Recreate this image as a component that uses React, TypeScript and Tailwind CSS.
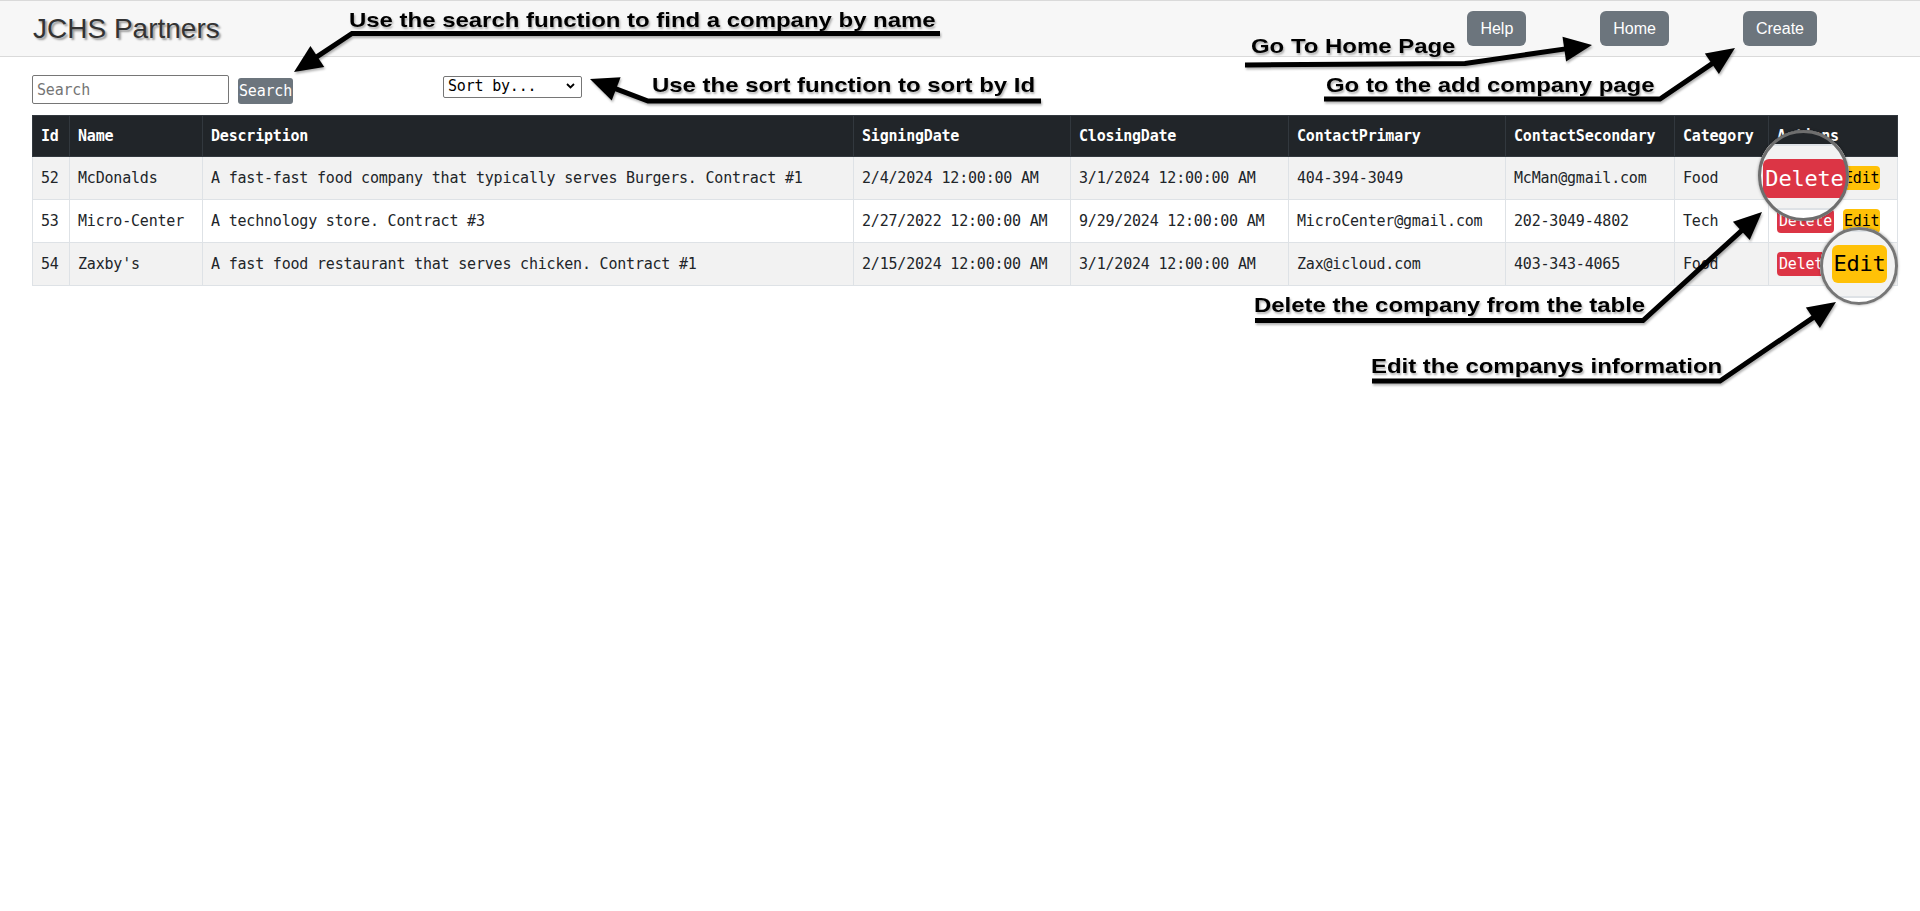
import React from 'react';

type Pt = [number, number];

const rows = [
  {
    id: 52,
    name: 'McDonalds',
    description: 'A fast-fast food company that typically serves Burgers. Contract #1',
    signing: '2/4/2024 12:00:00 AM',
    closing: '3/1/2024 12:00:00 AM',
    primary: '404-394-3049',
    secondary: 'McMan@gmail.com',
    category: 'Food',
  },
  {
    id: 53,
    name: 'Micro-Center',
    description: 'A technology store. Contract #3',
    signing: '2/27/2022 12:00:00 AM',
    closing: '9/29/2024 12:00:00 AM',
    primary: 'MicroCenter@gmail.com',
    secondary: '202-3049-4802',
    category: 'Tech',
  },
  {
    id: 54,
    name: "Zaxby's",
    description: 'A fast food restaurant that serves chicken. Contract #1',
    signing: '2/15/2024 12:00:00 AM',
    closing: '3/1/2024 12:00:00 AM',
    primary: 'Zax@icloud.com',
    secondary: '403-343-4065',
    category: 'Food',
  },
];

const columns = [
  { label: 'Id', w: 'w-[37px]' },
  { label: 'Name', w: 'w-[133px]' },
  { label: 'Description', w: 'w-[651px]' },
  { label: 'SigningDate', w: 'w-[217px]' },
  { label: 'ClosingDate', w: 'w-[218px]' },
  { label: 'ContactPrimary', w: 'w-[217px]' },
  { label: 'ContactSecondary', w: 'w-[169px]' },
  { label: 'Category', w: 'w-[94px]' },
  { label: 'Actions', w: 'w-[129px]' },
];

// arrow: a thick line through pts, finishing in a head at tip
function Arrow({ pts, tip }: { pts: Pt[]; tip: Pt }) {
  const last = pts[pts.length - 1];
  const dx = tip[0] - last[0];
  const dy = tip[1] - last[1];
  const len = Math.hypot(dx, dy);
  const ux = dx / len;
  const uy = dy / len;
  const L = 28;
  const W = 12.5;
  const bx = tip[0] - ux * L;
  const by = tip[1] - uy * L;
  const head = [tip, [bx - uy * W, by + ux * W], [bx + uy * W, by - ux * W]];
  const line = [...pts, [bx + ux * 3, by + uy * 3]];
  return (
    <g>
      <polyline
        points={line.map((p) => p.join(',')).join(' ')}
        fill="none"
        stroke="#000"
        strokeWidth={5}
        strokeLinejoin="miter"
      />
      <polygon points={head.map((p) => p.join(',')).join(' ')} fill="#000" />
    </g>
  );
}

function Note({ children, className }: { children: React.ReactNode; className: string }) {
  return (
    <div
      className={`absolute whitespace-nowrap font-['Liberation_Sans',Arial,sans-serif] text-[21px] font-bold leading-none tracking-normal text-black origin-left scale-x-[1.14] [text-shadow:1px_2px_2px_rgba(0,0,0,0.3)] ${className}`}
    >
      {children}
    </div>
  );
}

export default function App() {
  return (
    <div className="relative min-h-[911px] w-full overflow-hidden bg-white font-['DejaVu_Sans_Mono',monospace] text-[15px] tracking-[-0.2px] text-[#212529]">
      {/* Top bar */}
      <header className="flex h-[57px] items-center justify-between border-t border-b border-[#dadada] bg-[#f7f7f7] pl-[33px] pr-[103px] font-['Liberation_Sans',Arial,sans-serif] tracking-normal">
        <div className="text-[28px] leading-none text-[#333] [text-shadow:2px_2px_2px_#9a9a9a]">JCHS Partners</div>
        <div className="flex gap-[74px]">
          {['Help', 'Home', 'Create'].map((b) => (
            <button
              key={b}
              className="h-[35px] rounded-[6px] bg-[#6c757d] px-[13px] text-[16px] text-white"
            >
              {b}
            </button>
          ))}
        </div>
      </header>

      <div className="px-[32px]">
        {/* Search + sort */}
        <div className="mt-[18px] flex items-start">
          <input
            placeholder="Search"
            className="h-[29px] w-[197px] rounded-[2px] border border-[#767676] px-[4px] placeholder:text-[#757575]"
          />
          <button className="ml-[9px] mt-[3px] h-[26px] w-[55px] rounded-[3px] bg-[#6c757d] px-[1px] text-white">
            Search
          </button>
          <div className="relative ml-[150px]">
            <select className="h-[22px] w-[139px] appearance-none rounded-[2px] border border-[#767676] bg-white pl-[4px] leading-none text-black">
              <option>Sort by...</option>
              <option>Id</option>
            </select>
            <svg
              className="pointer-events-none absolute right-[7px] top-[8px]"
              width="9"
              height="6"
              viewBox="0 0 9 6"
            >
              <path d="M1 1 L4.5 4.5 L8 1" fill="none" stroke="#000" strokeWidth="1.8" />
            </svg>
          </div>
        </div>

        {/* Companies table */}
        <table className="mt-[11px] w-[1865px] table-fixed border-collapse">
          <colgroup>
            {columns.map((c) => (
              <col key={c.label} className={c.w} />
            ))}
          </colgroup>
          <thead>
            <tr className="h-[41px] bg-[#212529] text-white">
              {columns.map((c) => (
                <th key={c.label} className="border border-[#32383e] px-[8px] text-left font-bold">
                  {c.label}
                </th>
              ))}
            </tr>
          </thead>
          <tbody>
            {rows.map((r, i) => (
              <tr key={r.id} className={`h-[43px] ${i % 2 === 0 ? 'bg-[#f2f2f2]' : 'bg-white'}`}>
                {[r.id, r.name, r.description, r.signing, r.closing, r.primary, r.secondary, r.category].map(
                  (v, j) => (
                    <td key={j} className="whitespace-nowrap border border-[#dee2e6] px-[8px]">
                      {v}
                    </td>
                  )
                )}
                <td className="border border-[#dee2e6] px-[8px]">
                  <div className="flex items-center gap-[9px]">
                    <button className="h-[24px] rounded-[4px] bg-[#dc3545] px-[2px] leading-none text-white">
                      Delete
                    </button>
                    <button className="h-[24px] rounded-[4px] bg-[#ffc107] px-[1px] leading-none text-black">
                      Edit
                    </button>
                  </div>
                </td>
              </tr>
            ))}
          </tbody>
        </table>
      </div>

      {/* Magnifier over the first Delete button */}
      <div className="absolute left-[1758px] top-[130px] h-[91px] w-[91px] overflow-hidden rounded-full bg-white">
        <div className="h-[14px] bg-[#212529]" />
        <div className="h-[66px] border-t-2 border-b-2 border-[#dee2e6] bg-[#f2f2f2]" />
        <div className="absolute left-[5px] top-[29px] flex h-[39px] w-[83px] items-center justify-center rounded-[6px] bg-[#dc3545] text-[22px] leading-none text-white">
          Delete
        </div>
      </div>
      <div className="absolute left-[1758px] top-[130px] h-[91px] w-[91px] rounded-full border-[3px] border-[#6e6e6e] shadow-[0_0_3px_rgba(0,0,0,0.35)]" />

      {/* Magnifier over the last Edit button */}
      <div className="absolute left-[1820px] top-[227px] h-[78px] w-[78px] overflow-hidden rounded-full bg-white">
        <div className="mt-[3px] h-[68px] border-t-2 border-b-2 border-[#dee2e6] bg-[#f2f2f2]" />
        <div className="absolute left-[12px] top-[18px] flex h-[38px] w-[55px] items-center justify-center rounded-[6px] bg-[#ffc107] text-[22px] leading-none text-black">
          Edit
        </div>
      </div>
      <div className="absolute left-[1820px] top-[227px] h-[78px] w-[78px] rounded-full border-[3px] border-[#767676] shadow-[0_0_3px_rgba(0,0,0,0.35)]" />

      {/* Annotations */}
      <svg
        className="pointer-events-none absolute left-0 top-0 drop-shadow-[1px_2px_1px_rgba(0,0,0,0.3)]"
        width="1920"
        height="911"
        viewBox="0 0 1920 911"
      >
        <Arrow pts={[[940, 33.5], [352, 33.5]]} tip={[294, 72]} />
        <Arrow pts={[[1041, 101], [648, 101]]} tip={[590, 79]} />
        <Arrow pts={[[1245, 65], [1465, 63.5]]} tip={[1592, 45]} />
        <Arrow pts={[[1324, 99], [1660, 99]]} tip={[1735, 48]} />
        <Arrow pts={[[1255, 320.5], [1643, 320.5]]} tip={[1762, 212]} />
        <Arrow pts={[[1372, 381], [1720, 381]]} tip={[1836, 302]} />
      </svg>

      <Note className="left-[349px] top-[9px]">Use the search function to find a company by name</Note>
      <Note className="left-[652px] top-[74px]">Use the sort function to sort by Id</Note>
      <Note className="left-[1251px] top-[35px]">Go To Home Page</Note>
      <Note className="left-[1326px] top-[74px]">Go to the add company page</Note>
      <Note className="left-[1254px] top-[294px]">Delete the company from the table</Note>
      <Note className="left-[1371px] top-[355px]">Edit the companys information</Note>
    </div>
  );
}
